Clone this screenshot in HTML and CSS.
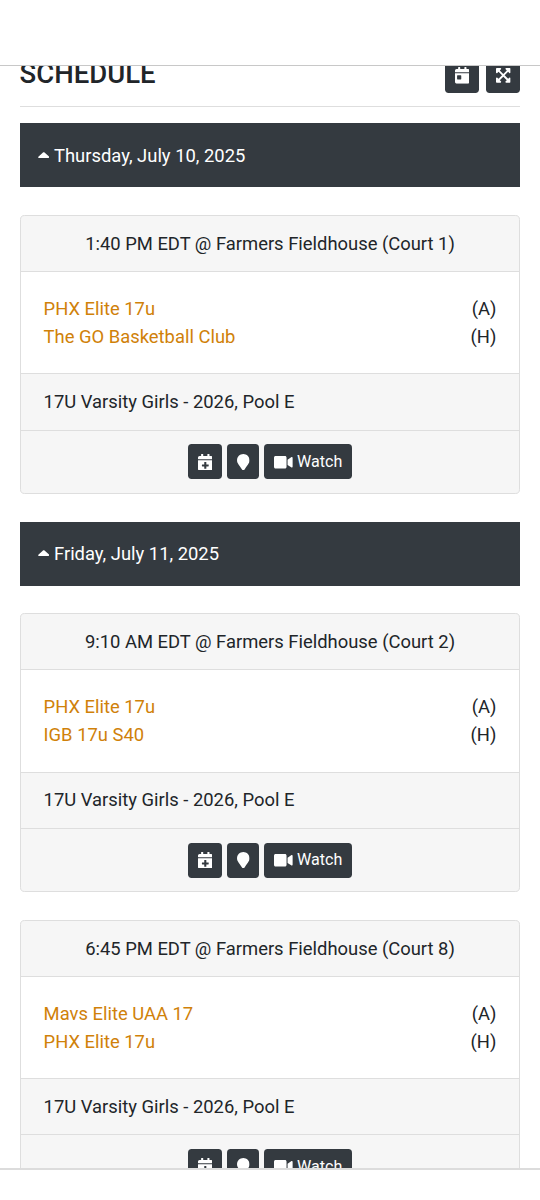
FILE: index.html
```
<!DOCTYPE html>
<html lang="en">
<head>
<meta charset="utf-8">
<title>Schedule</title>
<link rel="stylesheet" href="styles.css">
</head>
<body>
<svg class="sprite" aria-hidden="true">
  <symbol id="caret" viewBox="0 0 12 6"><path d="M1 6h10c.8 0 1.2-.8.6-1.300L6.800.4c-.5-.5-1.100-.5-1.600 0L.4 4.700C-.2 5.200.200 6 1 6z"/></symbol>
  <symbol id="cal-day" viewBox="0 0 448 512"><path fill-rule="evenodd" d="M0 464c0 26 22 48 48 48h352c26 0 48-22 48-48V192H0v272zm64-192c0-9 7-16 16-16h96c9 0 16 7 16 16v96c0 9-7 16-16 16H80c-9 0-16-7-16-16v-96zM400 64h-48V16c0-9-7-16-16-16h-32c-9 0-16 7-16 16v48H160V16c0-9-7-16-16-16h-32c-9 0-16 7-16 16v48H48C22 64 0 86 0 112v48h448v-48c0-26-22-48-48-48z"/></symbol>
  <symbol id="cal-plus" viewBox="0 0 448 512"><path fill-rule="evenodd" d="M436 160H12c-7 0-12-5-12-12v-36c0-26 22-48 48-48h48V12c0-7 5-12 12-12h40c7 0 12 5 12 12v52h128V12c0-7 5-12 12-12h40c7 0 12 5 12 12v52h48c26 0 48 22 48 48v36c0 7-5 12-12 12zM12 192h424c7 0 12 5 12 12v260c0 26-22 48-48 48H48c-26 0-48-22-48-48V204c0-7 5-12 12-12zm316 140c0-7-5-12-12-12h-60v-60c0-7-5-12-12-12h-40c-7 0-12 5-12 12v60h-60c-7 0-12 5-12 12v40c0 7 5 12 12 12h60v60c0 7 5 12 12 12h40c7 0 12-5 12-12v-60h60c7 0 12-5 12-12v-40z"/></symbol>
  <symbol id="marker" viewBox="0 0 384 512"><path d="M172 502C27 291 0 270 0 192 0 86 86 0 192 0s192 86 192 192c0 78-27 99-172 310-10 13-30 13-40 0z"/></symbol>
  <symbol id="video" viewBox="0 0 576 512"><path d="M336 64H48C21 64 0 85 0 112v288c0 27 21 48 48 48h288c27 0 48-21 48-48V112c0-27-21-48-48-48zm190 38L416 177v158l110 75c21 15 50 0 50-25V127c0-26-29-40-50-25z"/></symbol>
  <symbol id="expand" viewBox="0 0 448 512"><path d="M448 345v112c0 13-11 24-24 24H313c-21 0-32-26-17-41l36-36-108-108-108 108 36 36c15 15 5 41-17 41H24c-13 0-24-11-24-24V345c0-21 26-32 41-17l36 36 108-108L77 148l-36 36c-15 15-41 4-41-17V55c0-13 11-24 24-24h112c21 0 32 26 17 41l-36 36 107 108 108-108-36-36c-15-15-5-41 17-41h112c13 0 24 11 24 24v112c0 21-26 32-41 17l-36-36-108 108 108 108 36-36c15-15 41-5 41 17z"/></symbol>
</svg>

<div class="page">
  <header class="topbar"></header>
  <main class="content">
    <div class="title-row">
      <h1 class="title">SCHEDULE</h1>
      <div class="tools">
        <button class="btn" aria-label="Today"><svg class="icon"><use href="#cal-day"/></svg></button>
        <button class="btn" aria-label="Expand"><svg class="icon"><use href="#expand"/></svg></button>
      </div>
    </div>

    <h2 class="date"><svg class="caret"><use href="#caret"/></svg>Thursday, July 10, 2025</h2>
    <article class="card">
      <div class="card-head">1:40 PM EDT @ Farmers Fieldhouse (Court 1)</div>
      <div class="card-body">
        <div class="team"><a class="link">PHX Elite 17u</a><span>(A)</span></div>
        <div class="team"><a class="link">The GO Basketball Club</a><span>(H)</span></div>
      </div>
      <div class="division">17U Varsity Girls - 2026, Pool E</div>
      <div class="actions">
        <button class="btn" aria-label="Add to calendar"><svg class="icon"><use href="#cal-plus"/></svg></button>
        <button class="btn" aria-label="Location"><svg class="icon icon-marker"><use href="#marker"/></svg></button>
        <button class="btn"><svg class="icon icon-video"><use href="#video"/></svg>Watch</button>
      </div>
    </article>

    <h2 class="date"><svg class="caret"><use href="#caret"/></svg>Friday, July 11, 2025</h2>
    <article class="card">
      <div class="card-head">9:10 AM EDT @ Farmers Fieldhouse (Court 2)</div>
      <div class="card-body">
        <div class="team"><a class="link">PHX Elite 17u</a><span>(A)</span></div>
        <div class="team"><a class="link">IGB 17u S40</a><span>(H)</span></div>
      </div>
      <div class="division">17U Varsity Girls - 2026, Pool E</div>
      <div class="actions">
        <button class="btn" aria-label="Add to calendar"><svg class="icon"><use href="#cal-plus"/></svg></button>
        <button class="btn" aria-label="Location"><svg class="icon icon-marker"><use href="#marker"/></svg></button>
        <button class="btn"><svg class="icon icon-video"><use href="#video"/></svg>Watch</button>
      </div>
    </article>

    <article class="card">
      <div class="card-head">6:45 PM EDT @ Farmers Fieldhouse (Court 8)</div>
      <div class="card-body">
        <div class="team"><a class="link">Mavs Elite UAA 17</a><span>(A)</span></div>
        <div class="team"><a class="link">PHX Elite 17u</a><span>(H)</span></div>
      </div>
      <div class="division">17U Varsity Girls - 2026, Pool E</div>
      <div class="actions">
        <button class="btn" aria-label="Add to calendar"><svg class="icon"><use href="#cal-plus"/></svg></button>
        <button class="btn" aria-label="Location"><svg class="icon icon-marker"><use href="#marker"/></svg></button>
        <button class="btn"><svg class="icon icon-video"><use href="#video"/></svg>Watch</button>
      </div>
    </article>
  </main>
  <footer class="bottombar"></footer>
</div>
</body>
</html>
```
FILE: styles.css
```
* { box-sizing: border-box; }

body {
  margin: 0;
  background: #fff;
  color: #212529;
  font-family: Roboto, sans-serif;
  font-size: 18.4px;
  line-height: 27.6px;
}

.sprite { display: none; }

.page {
  display: grid;
  grid-template-rows: 66px 1102px 32px;
  height: 1200px;
  overflow: hidden;
}

.topbar { border-bottom: 1px solid #c8c8c8; }
.bottombar { border-top: 2px solid #dcdcdc; }

.content {
  overflow: hidden;
  padding: 0 19.600px;
}

.title-row {
  display: flex;
  justify-content: space-between;
  align-items: flex-start;
  height: 49px;
  margin: -8px 0 16.400px;
  border-bottom: 1px solid #dedede;
}

.title {
  margin: 0;
  font-size: 27.5px;
  font-weight: 500;
  line-height: 31px;
}

.tools { display: flex; gap: 7px; }

.date {
  display: flex;
  align-items: center;
  gap: 4.500px;
  height: 64px;
  margin: 0 0 27.600px;
  padding: 0 18.400px;
  background: #343a40;
  color: #fff;
  font-size: 18.4px;
  font-weight: 400;
}

.caret { width: 11.500px; height: 6px; margin-top: -1px; fill: #fff; }

.card {
  margin-bottom: 27.700px;
  background: #f6f6f6;
  border: 1px solid #dedede;
  border-radius: 4.600px;
  overflow: hidden;
}

.card-head {
  padding: 13.800px 0;
  text-align: center;
}

.card-body {
  padding: 23px;
  background: #fff;
  border-top: 1px solid #dedede;
  border-bottom: 1px solid #dedede;
}

.team { display: flex; justify-content: space-between; }
.link { color: #d08109; }

.division { padding: 13.800px 23px; }

.actions {
  display: flex;
  justify-content: center;
  gap: 5px;
  height: 63.400px;
  padding-top: 13.800px;
  border-top: 1px solid #dedede;
}

.btn {
  display: flex;
  align-items: center;
  justify-content: center;
  gap: 4px;
  height: 35px;
  padding: 0 9.800px;
  border: 0;
  border-radius: 3.700px;
  background: #343a40;
  color: #fff;
  font: 400 16.1px/24px Roboto, sans-serif;
}

.icon { width: 14.600px; height: 16.700px; fill: #fff; }
.icon-marker { width: 12.600px; }
.icon-video { width: 18.800px; }
```
